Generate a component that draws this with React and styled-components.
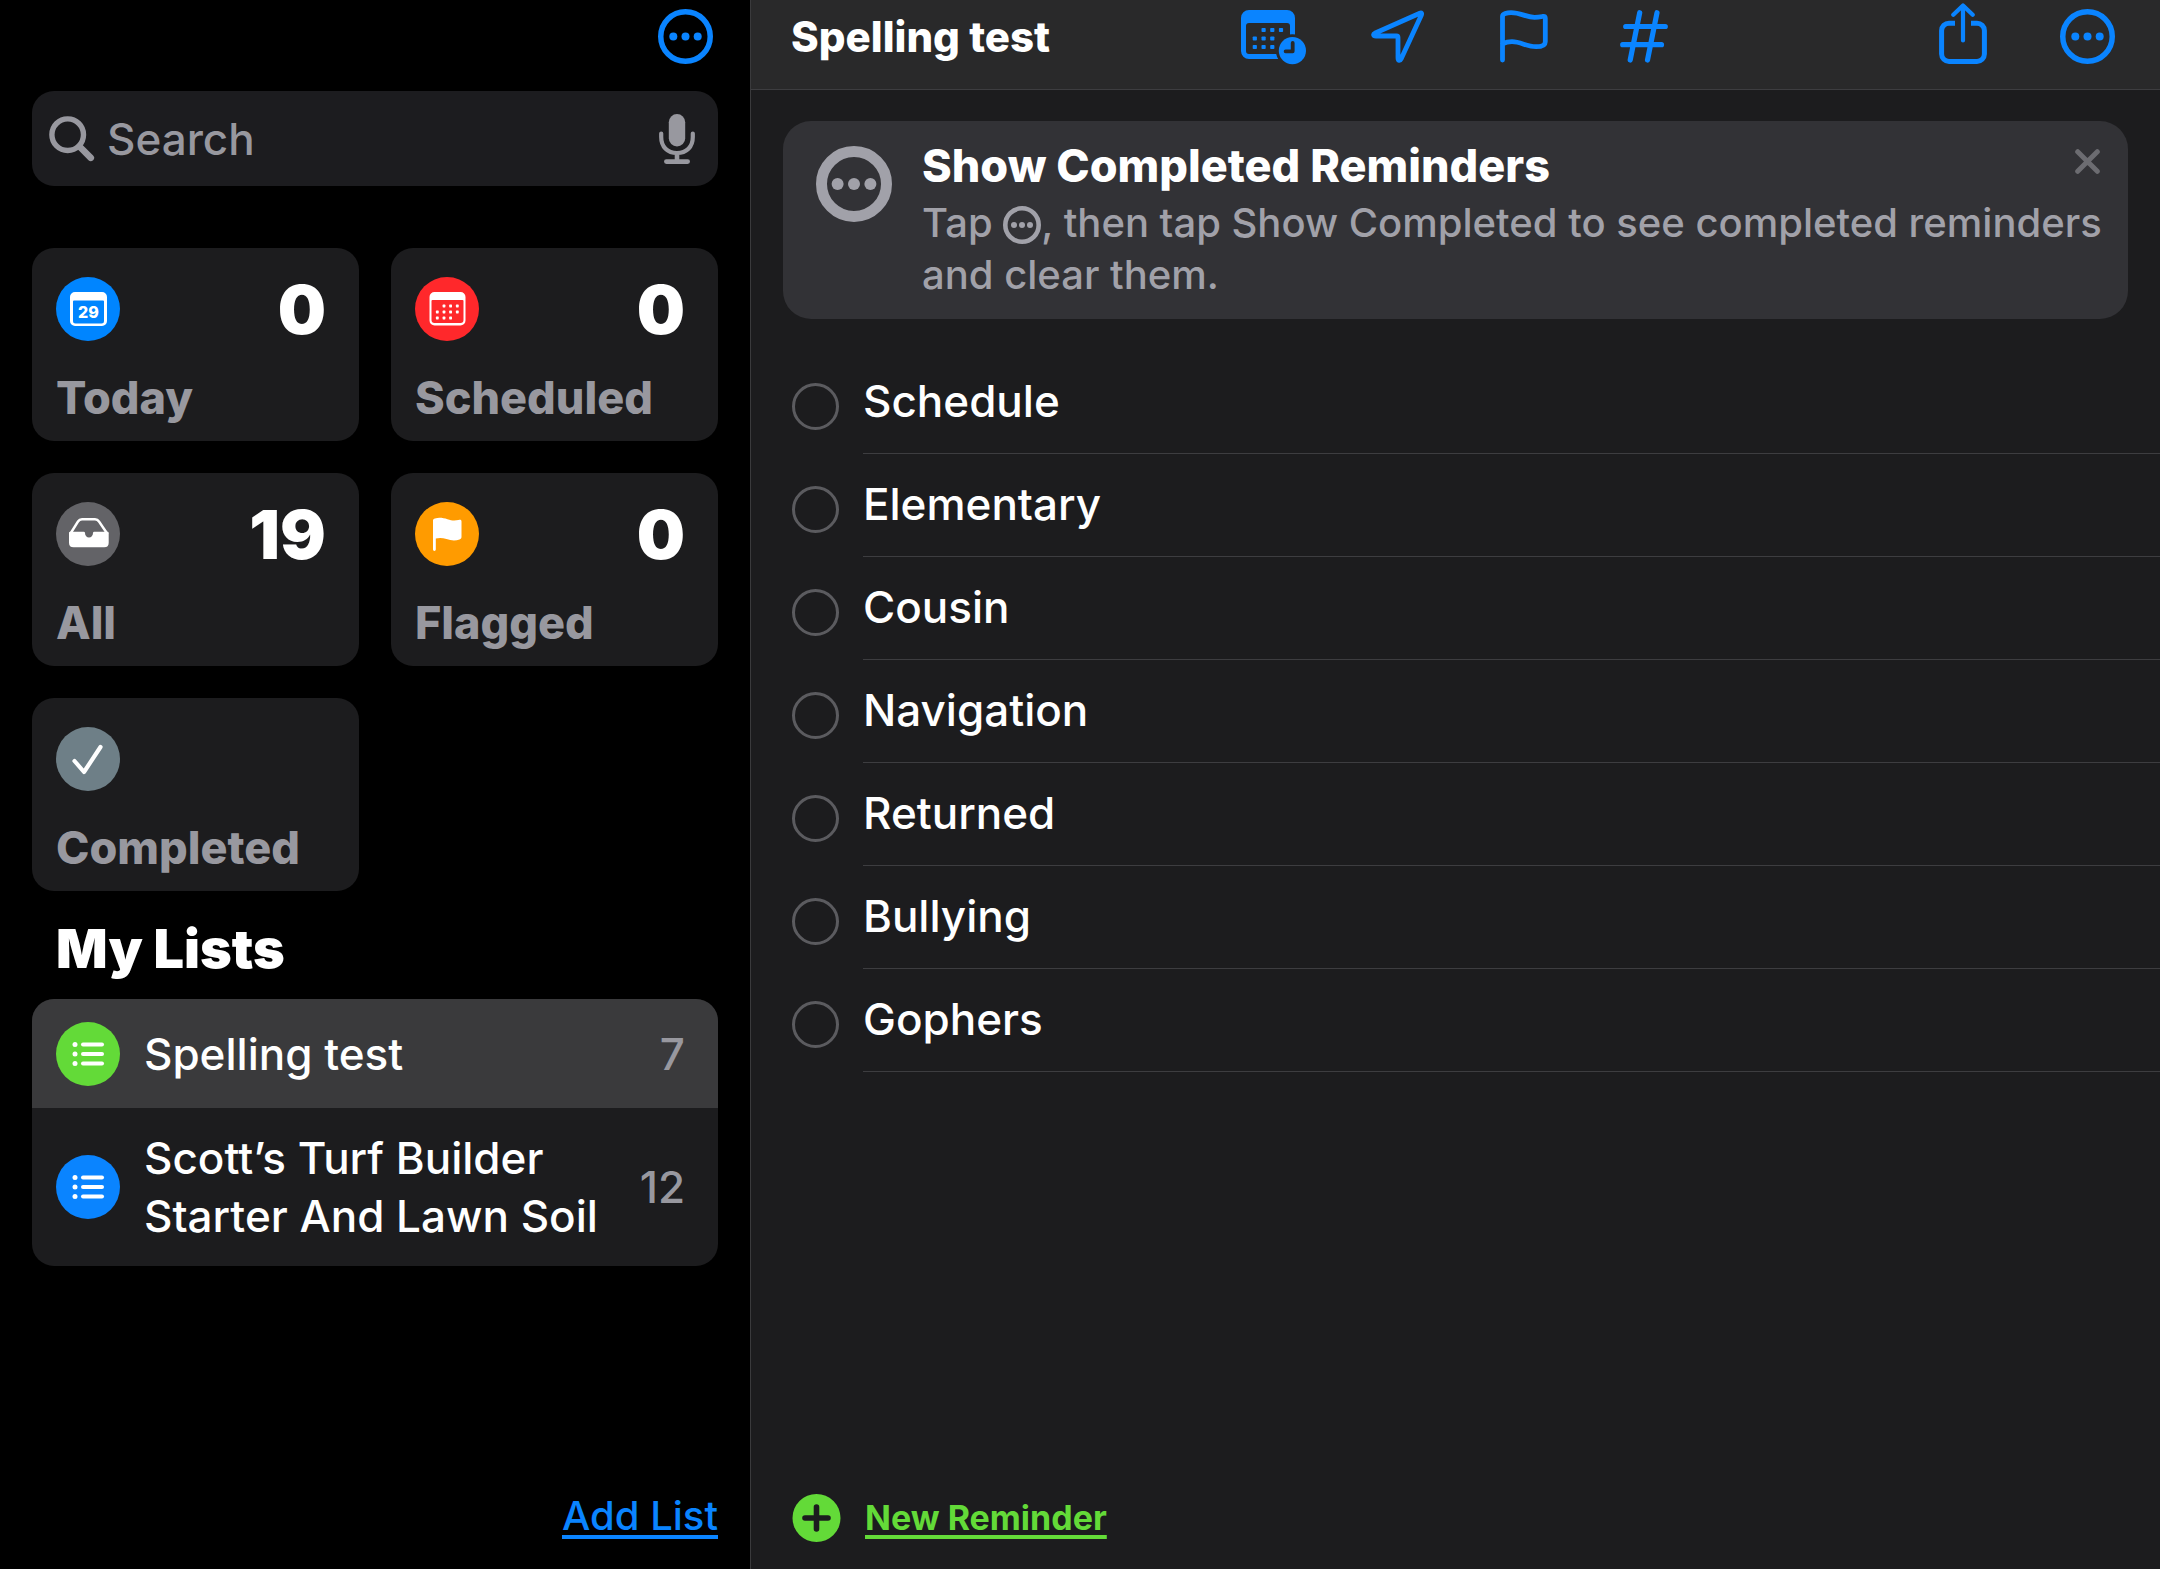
import React, { useState } from 'react';
import styled, { createGlobalStyle } from 'styled-components';

const GlobalStyle = createGlobalStyle`
  * {
    box-sizing: border-box;
  }

  body {
    margin: 0;
    background: #000;
    color: #fff;
    font-family: Inter, "Liberation Sans", sans-serif;
  }

  svg {
    display: block;
  }

  button {
    padding: 0;
    border: none;
    background: none;
    font-family: inherit;
    color: inherit;
    cursor: pointer;
  }

  h1, h2, h3, p, ul {
    margin: 0;
    padding: 0;
  }

  ul {
    list-style: none;
  }
`;

const Page = styled.div`
  display: grid;
  grid-template-columns: 751px 1fr;
  min-height: 100vh;
`;

const Sidebar = styled.aside`
  display: flex;
  flex-direction: column;
  padding: 9px 32px 27px;
  border-right: 1px solid #3a3a3c;
  background: #000;
`;

const SidebarHeader = styled.div`
  display: flex;
  justify-content: flex-end;
  padding-right: 5px;
  margin-bottom: 27px;
  color: #0a84ff;
`;

const SearchBox = styled.label`
  display: flex;
  align-items: center;
  gap: 12px;
  height: 95px;
  padding: 0 23px 0 17px;
  border-radius: 22px;
  background: #1c1c1f;
  color: #98989f;
`;

const SearchInput = styled.input`
  flex: 1;
  min-width: 0;
  padding: 0;
  border: none;
  outline: none;
  background: none;
  color: #fff;
  font-family: inherit;
  font-size: 44px;
  font-weight: 500;

  &::placeholder {
    color: #98989f;
    opacity: 1;
  }
`;

const Cards = styled.div`
  display: grid;
  grid-template-columns: 1fr 1fr;
  gap: 32px;
  margin-top: 62px;
`;

const Card = styled.button`
  display: flex;
  flex-direction: column;
  justify-content: space-between;
  height: 193px;
  padding: 29px 33px 15px 24px;
  border-radius: 22px;
  background: #1c1c1e;
  text-align: left;
`;

const CardTop = styled.span`
  display: flex;
  align-items: center;
  justify-content: space-between;
  width: 100%;
  height: 64px;
`;

const CardCount = styled.span`
  font-size: 68px;
  line-height: 62px;
  font-weight: 900;
  color: #fff;
`;

const CardLabel = styled.span`
  font-size: 45px;
  line-height: 56px;
  font-weight: 800;
  color: #98989f;
`;

const Badge = styled.span`
  flex: none;
  width: 64px;
  height: 64px;
  border-radius: 50%;
  background: ${props => props.color};
  color: #fff;
`;

const ListsTitle = styled.h2`
  padding: 24px 24px 16px;
  font-size: 54px;
  line-height: 68px;
  font-weight: 900;
`;

const Lists = styled.ul`
  border-radius: 22px;
  overflow: hidden;
  background: #1c1c1e;
`;

const ListRow = styled.button`
  display: flex;
  align-items: center;
  gap: 24px;
  width: 100%;
  min-height: 109px;
  padding: 21px 33px 21px 24px;
  background: ${props => (props.$selected ? '#3a3a3c' : 'transparent')};
  font-size: 44px;
  line-height: 58px;
  font-weight: 500;
  text-align: left;
`;

const ListName = styled.span`
  flex: 1;
`;

const ListCount = styled.span`
  color: #98989f;
`;

const AddList = styled.a`
  align-self: flex-end;
  margin-top: auto;
  color: #0a84ff;
  font-size: 40px;
  line-height: 52px;
  font-weight: 500;
  text-decoration: underline 4px;
  text-underline-offset: 5px;
  text-decoration-skip-ink: none;
`;

const Main = styled.main`
  display: flex;
  flex-direction: column;
  background: #1c1c1e;
`;

const Toolbar = styled.header`
  display: grid;
  grid-template-columns: 450px auto 1fr;
  align-items: center;
  height: 90px;
  padding: 0 40px 16px 40px;
  border-bottom: 1px solid #3d3d40;
  background: #29292a;
`;

const Title = styled.h1`
  font-size: 42px;
  line-height: 52px;
  font-weight: 800;
`;

const ToolGroup = styled.div`
  display: flex;
  justify-content: flex-end;
  gap: 58px;
  color: #0a84ff;
`;

const ToolButton = styled.button`
  display: flex;
  align-items: center;
  justify-content: center;
  width: 66px;
  height: 73px;
`;

const Banner = styled.section`
  display: flex;
  gap: 30px;
  margin: 31px 32px 0;
  padding: 16px 24px 18px 33px;
  border-radius: 28px;
  background: #323236;
  color: #a1a1a9;
`;

const BannerIcon = styled.div`
  flex: none;
  padding-top: 9px;
`;

const BannerBody = styled.div`
  flex: 1;
`;

const BannerHead = styled.div`
  display: flex;
  justify-content: space-between;
  height: 60px;
`;

const BannerTitle = styled.h3`
  font-size: 45px;
  line-height: 58px;
  font-weight: 800;
  color: #fff;
`;

const CloseButton = styled.button`
  align-self: flex-start;
  padding: 12px 4px 0;
  color: #6c6c71;
`;

const BannerText = styled.p`
  font-size: 40px;
  line-height: 52px;
  font-weight: 500;

  svg {
    display: inline-block;
    vertical-align: -7px;
  }
`;

const Reminders = styled.ul`
  margin-top: 32px;
`;

const Reminder = styled.li`
  display: flex;
  gap: 24px;
  padding-left: 41px;
`;

const Check = styled.input`
  appearance: none;
  flex: none;
  width: 47px;
  height: 47px;
  margin: 32px 0 0;
  border: 3px solid #5b5b5f;
  border-radius: 50%;

  &:checked {
    background: #63da38;
  }
`;

const ReminderLabel = styled.label`
  flex: 1;
  height: 103px;
  padding-top: 21px;
  border-bottom: 1px solid #3d3d40;
  font-size: 44px;
  line-height: 58px;
  font-weight: 500;
`;

const Footer = styled.footer`
  display: flex;
  align-items: center;
  gap: 24px;
  margin-top: auto;
  padding: 0 41px 27px;
  color: #63da38;
`;

const NewReminder = styled.a`
  color: inherit;
  font-size: 34px;
  line-height: 48px;
  font-weight: 700;
  text-decoration: underline 4px;
  text-underline-offset: 5px;
  text-decoration-skip-ink: none;
`;

const MoreIcon = ({ size = 55, ring = 5.5, dot = 4, step = 12.2 }) => {
  const c = size / 2;
  return (
    <svg width={size} height={size} fill="currentColor">
      <circle cx={c} cy={c} r={c - ring / 2} fill="none" stroke="currentColor" strokeWidth={ring} />
      <circle cx={c - step} cy={c} r={dot} />
      <circle cx={c} cy={c} r={dot} />
      <circle cx={c + step} cy={c} r={dot} />
    </svg>
  );
};

const SearchIcon = () => (
  <svg width="46" height="46" fill="none" stroke="currentColor" strokeLinecap="round">
    <circle cx="18.7" cy="18.7" r="15.8" strokeWidth="5.4" />
    <path d="M31 31 41.8 41.8" strokeWidth="6.6" />
  </svg>
);

const MicIcon = () => (
  <svg width="36" height="50" fill="none" stroke="currentColor" strokeLinecap="round">
    <rect x="9.8" y="0" width="16.4" height="32.5" rx="8.2" fill="currentColor" stroke="none" />
    <path d="M2.2 19.5V23c0 10 6.3 16 15.8 16s15.800-6 15.800-16v-3.500" strokeWidth="4.2" />
    <path d="M18 40v6" strokeWidth="4.6" strokeLinecap="butt" />
    <path d="M7.4 47.6h21.2" strokeWidth="4.8" />
  </svg>
);

const TodayIcon = () => (
  <svg width="64" height="64" fill="currentColor">
    <path fillRule="evenodd" d="M19 15h27a5 5 0 0 1 5 5v24a5 5 0 0 1-5 5H19a5 5 0 0 1-5-5V20a5 5 0 0 1 5-5zm-1 8.500a1 1 0 0 0-1 1V44a2.500 2.500 0 0 0 2.500 2.500h26A2.500 2.500 0 0 0 48 44V24.500a1 1 0 0 0-1-1z" />
    <text x="32.5" y="41" textAnchor="middle" fontSize="16" fontWeight="800">29</text>
  </svg>
);

const dots = [[29, 29], [35.6, 29], [42.3, 29], [22.3, 35], [29, 35], [35.6, 35], [42.3, 35], [22.3, 41], [29, 41], [35.6, 41]];

const ScheduledIcon = () => (
  <svg width="64" height="64" fill="currentColor">
    <path fillRule="evenodd" d="M19.5 15h26a5 5 0 0 1 5 5v23.500a5 5 0 0 1-5 5h-26a5 5 0 0 1-5-5V20a5 5 0 0 1 5-5zm-2 8a1 1 0 0 0-1 1v19a3 3 0 0 0 3 3h26a3 3 0 0 0 3-3V24a1 1 0 0 0-1-1z" />
    {dots.map(([x, y]) => (
      <rect key={`${x}-${y}`} x={x - 1.4} y={y - 1.4} width="2.8" height="2.8" rx="0.6" />
    ))}
  </svg>
);

const TrayIcon = () => (
  <svg width="64" height="64" fill="currentColor">
    <path d="M14.2 32 22 19.500q1.400-2.200 4-2.200h13q2.600 0 4 2.200L51.500 32" fill="none" stroke="currentColor" strokeWidth="2.4" />
    <path d="M13 31q0-1.300 1.300-1.300h13.400q1.300 0 1.300 1.300a4 4.500 0 0 0 8 0q0-1.300 1.300-1.300h13q1.400 0 1.400 1.300v9.800q0 4.500-4.500 4.500h-30.700q-4.500 0-4.500-4.500z" />
  </svg>
);

const FlaggedIcon = () => (
  <svg width="64" height="64" fill="currentColor">
    <path d="M18 18.500c0-1 .8-1.600 2-2 3.600-1.200 8-.8 12.500.8 4 1.500 7.500 1.600 11 .8 2-.5 3-.3 3 1.400v15.500c0 1.300-.6 2-2 2.500-4 1.500-8.500 1.200-13-.4-3.800-1.300-7.200-1.500-10.700-.6v11a1.400 1.400 0 0 1-2.800 0z" />
  </svg>
);

const CheckIcon = () => (
  <svg width="64" height="64" fill="none" stroke="currentColor" strokeWidth="4.2" strokeLinecap="round" strokeLinejoin="round">
    <path d="M18.5 34 28 45 44.5 20" />
  </svg>
);

const BulletsIcon = () => (
  <svg width="64" height="64" fill="currentColor">
    {[22.5, 32, 41.5].map(y => (
      <g key={y}>
        <circle cx="19" cy={y} r="2.5" />
        <rect x="25" y={y - 2} width="23" height="4" rx="2" />
      </g>
    ))}
  </svg>
);

const calendarDots = [[22.6, 25], [31.3, 25], [40, 25], [13.8, 33.5], [22.6, 33.5], [31.3, 33.5], [13.8, 42], [22.6, 42], [31.3, 42]];

const CalendarClockIcon = () => (
  <svg width="66" height="64" fill="currentColor">
    <mask id="clock-gap">
      <rect width="66" height="64" fill="#fff" />
      <circle cx="51.4" cy="45.7" r="16.5" fill="#000" />
    </mask>
    <g mask="url(#clock-gap)">
      <path fillRule="evenodd" d="M8 5h38a8 8 0 0 1 8 8v33a8 8 0 0 1-8 8H8a8 8 0 0 1-8-8V13a8 8 0 0 1 8-8zm0 13a3 3 0 0 0-3 3v25a3 3 0 0 0 3 3h38a3 3 0 0 0 3-3V21a3 3 0 0 0-3-3z" />
    </g>
    {calendarDots.map(([x, y]) => (
      <rect key={`${x}-${y}`} x={x - 2.1} y={y - 2.1} width="4.2" height="4.2" rx="0.8" />
    ))}
    <circle cx="51.4" cy="45.7" r="13.6" />
    <path d="M51.7 38v8.300H44.600" fill="none" stroke="#29292a" strokeWidth="3.8" strokeLinecap="round" strokeLinejoin="round" />
  </svg>
);

const LocationIcon = () => (
  <svg width="54" height="53" fill="none" stroke="currentColor" strokeWidth="4.8" strokeLinejoin="round">
    <path d="M48.8 3.200 4.300 23c-2.600 1.200-2.100 3 .7 3h20.500q1.500 0 1.500 1.500V48c0 2.800 2 3.200 3.200.7L50.300 5.200c.8-1.800.2-2.700-1.500-2z" />
  </svg>
);

const FlagIcon = () => (
  <svg width="52" height="53" viewBox="-4 0 52 53" fill="none" stroke="currentColor" strokeWidth="4.8" strokeLinecap="round" strokeLinejoin="round">
    <path d="M2.5 50V6.300C2.500 4 7 2.600 11 2.600 21 2.600 26 7.400 34.500 7.400c4 0 6.500-.6 8.500-1 1.700-.3 2.300.3 2.300 1.800v23.500c0 3.800-5 5-9.300 5-9.500 0-15-5-24-5-4 0-6.500.7-9.500 2" />
  </svg>
);

const HashIcon = () => (
  <svg width="52" height="53" fill="none" stroke="currentColor" strokeWidth="5.2" strokeLinecap="round">
    <path d="M5.7 16.500H45.300M2.700 34.700H41.500M19.700 2.700 10.200 50M37 2.700 27.500 50" />
  </svg>
);

const ShareIcon = () => (
  <svg width="48" height="67" fill="none" stroke="currentColor" strokeLinejoin="round">
    <path d="M16 20.200H10A7.400 7.400 0 0 0 2.600 27.600V51a7.400 7.400 0 0 0 7.400 7.400h28a7.400 7.400 0 0 0 7.400-7.400V27.600a7.400 7.400 0 0 0-7.400-7.400H32" strokeWidth="5" />
    <path d="M24 3v34.500M14.300 11.800 24 2.500l9.700 9.300" strokeWidth="4.2" strokeLinecap="round" />
  </svg>
);

const CloseIcon = () => (
  <svg width="25" height="25" fill="none" stroke="currentColor" strokeWidth="5" strokeLinecap="round">
    <path d="M2.7 2.700 22.300 22.300M22.300 2.700 2.700 22.300" />
  </svg>
);

const PlusIcon = () => (
  <svg width="49" height="48">
    <circle cx="24.5" cy="24" r="24" fill="currentColor" />
    <path d="M24.5 13v22M13 24h23" stroke="#1c1c1e" strokeWidth="5.6" strokeLinecap="round" />
  </svg>
);

const cards = [
  { name: 'Today', count: 0, color: '#0085ff', Icon: TodayIcon },
  { name: 'Scheduled', count: 0, color: '#ff282b', Icon: ScheduledIcon },
  { name: 'All', count: 19, color: '#636367', Icon: TrayIcon },
  { name: 'Flagged', count: 0, color: '#ff9b00', Icon: FlaggedIcon },
  { name: 'Completed', color: '#6e7f87', Icon: CheckIcon },
];

const lists = [
  { name: 'Spelling test', count: 7, color: '#63da38' },
  { name: 'Scott’s Turf Builder Starter And Lawn Soil', count: 12, color: '#0a84ff' },
];

const reminders = ['Schedule', 'Elementary', 'Cousin', 'Navigation', 'Returned', 'Bullying', 'Gophers'];

const App = () => {
  const [selected, setSelected] = useState(0);
  const [showBanner, setShowBanner] = useState(true);

  return (
    <Page>
      <GlobalStyle />
      <Sidebar>
        <SidebarHeader>
          <button aria-label="More"><MoreIcon /></button>
        </SidebarHeader>
        <SearchBox>
          <SearchIcon />
          <SearchInput type="text" placeholder="Search" aria-label="Search" />
          <button aria-label="Dictate"><MicIcon /></button>
        </SearchBox>
        <Cards>
          {cards.map(({ name, count, color, Icon }) => (
            <Card key={name}>
              <CardTop>
                <Badge color={color}><Icon /></Badge>
                <CardCount>{count}</CardCount>
              </CardTop>
              <CardLabel>{name}</CardLabel>
            </Card>
          ))}
        </Cards>
        <ListsTitle>My Lists</ListsTitle>
        <Lists>
          {lists.map((list, index) => (
            <li key={list.name}>
              <ListRow $selected={selected === index} onClick={() => setSelected(index)}>
                <Badge color={list.color}><BulletsIcon /></Badge>
                <ListName>{list.name}</ListName>
                <ListCount>{list.count}</ListCount>
              </ListRow>
            </li>
          ))}
        </Lists>
        <AddList href="#add-list">Add List</AddList>
      </Sidebar>
      <Main>
        <Toolbar>
          <Title>Spelling test</Title>
          <ToolGroup>
            <ToolButton aria-label="Date"><CalendarClockIcon /></ToolButton>
            <ToolButton aria-label="Location"><LocationIcon /></ToolButton>
            <ToolButton aria-label="Flag"><FlagIcon /></ToolButton>
            <ToolButton aria-label="Tag"><HashIcon /></ToolButton>
          </ToolGroup>
          <ToolGroup>
            <ToolButton aria-label="Share"><ShareIcon /></ToolButton>
            <ToolButton aria-label="List options"><MoreIcon /></ToolButton>
          </ToolGroup>
        </Toolbar>
        {showBanner && (
          <Banner>
            <BannerIcon><MoreIcon size={76} ring={11} dot={6} step={16.4} /></BannerIcon>
            <BannerBody>
              <BannerHead>
                <BannerTitle>Show Completed Reminders</BannerTitle>
                <CloseButton aria-label="Close" onClick={() => setShowBanner(false)}><CloseIcon /></CloseButton>
              </BannerHead>
              <BannerText>
                Tap <MoreIcon size={38} ring={4.6} dot={3} step={8} />, then tap Show Completed to see completed reminders and clear them.
              </BannerText>
            </BannerBody>
          </Banner>
        )}
        <Reminders>
          {reminders.map(name => (
            <Reminder key={name}>
              <Check type="checkbox" id={name} />
              <ReminderLabel htmlFor={name}>{name}</ReminderLabel>
            </Reminder>
          ))}
        </Reminders>
        <Footer>
          <PlusIcon />
          <NewReminder href="#new-reminder">New Reminder</NewReminder>
        </Footer>
      </Main>
    </Page>
  );
};

export default App;
